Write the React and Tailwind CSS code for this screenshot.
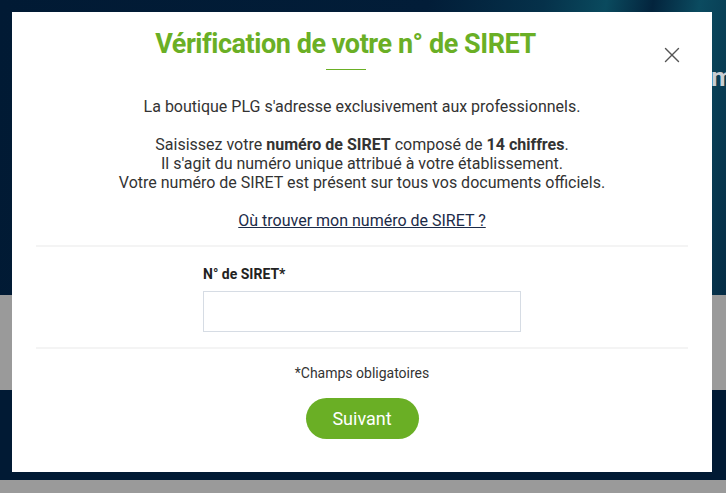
import { X } from "lucide-react";

const App = () => {
    return (
        <div className="relative h-[493px] w-[726px] overflow-hidden font-['Roboto',sans-serif]">
            {/* page behind the modal */}
            <div className="flex h-full flex-col">
                <div className="h-[295px] bg-[#011a34] bg-[linear-gradient(100deg,#011a34_0%,#021d38_55%,#05314a_70%,#0a4a5e_78%,#03243d_84%,#0b4b60_90%,#052c45_100%)]">
                    <div className="overflow-hidden whitespace-nowrap pl-[711px] pt-[58px] text-[26px] font-bold text-[#c9ced3]">
                        m
                    </div>
                </div>
                <div className="h-[95px] bg-[#9a9a9a]"></div>
                <div className="h-[90px] bg-[#011a34]"></div>
                <div className="flex-1 bg-[#9a9a9a]"></div>
            </div>

            {/* modal */}
            <div className="absolute inset-0 p-3">
                <div className="relative flex h-[460px] w-[700px] flex-col items-center bg-white px-6 pt-4">
                    <button className="absolute right-[27px] top-[30px] text-[#555]">
                        <X size={26} strokeWidth={1.3} />
                    </button>

                    <h1 className="w-full pr-[33px] text-center text-[27px] font-bold leading-8 tracking-[-0.45px] text-[#6aaf25]">
                        Vérification de votre n° de SIRET
                    </h1>
                    <div className="mr-[33px] mt-[9px] h-px w-10 bg-[#6aaf25]"></div>

                    <div className="mt-[27px] text-center text-[16px] leading-[19px] text-[#333]">
                        <p>La boutique PLG s'adresse exclusivement aux professionnels.</p>
                        <p className="mt-[19px]">
                            Saisissez votre <b>numéro de SIRET</b> composé de <b>14 chiffres</b>.
                            <br />
                            Il s'agit du numéro unique attribué à votre établissement.
                            <br />
                            Votre numéro de SIRET est présent sur tous vos documents officiels.
                        </p>
                        <p className="mt-[19px]">
                            <a href="#" className="text-[#1c2b48] underline">
                                Où trouver mon numéro de SIRET ?
                            </a>
                        </p>
                    </div>

                    <div className="mt-[15px] h-[2px] w-full bg-[#f4f4f4]"></div>

                    <div className="mt-[17px] flex w-[318px] flex-col">
                        <label className="text-[14px] font-bold leading-5 text-[#222]">N° de SIRET*</label>
                        <input
                            type="text"
                            className="mt-[7px] h-[41px] w-full border border-[#d6dce4] px-3 text-[15px] outline-none"
                        />
                    </div>

                    <div className="mt-[15px] h-[2px] w-full bg-[#f4f4f4]"></div>

                    <p className="mt-[14px] text-[14px] leading-5 text-[#333]">*Champs obligatoires</p>

                    <button className="mt-[15px] h-[41px] w-[113px] rounded-full bg-[#6aaf25] text-[18px] font-normal text-white">
                        Suivant
                    </button>
                </div>
            </div>
        </div>
    );
};

export default App;
